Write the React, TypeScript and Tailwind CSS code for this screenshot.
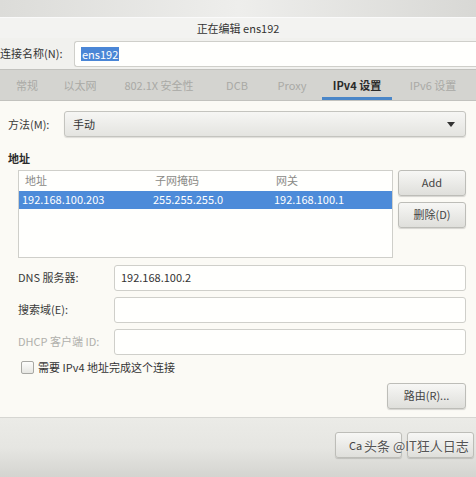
import React from "react";

const font = "font-['Noto_Sans_CJK_SC','Noto_Sans',sans-serif]";

const tabs: { label: string; w: string; active?: boolean }[] = [
  { label: "常规", w: "w-[54px]" },
  { label: "以太网", w: "w-[52px]" },
  { label: "802.1X 安全性", w: "w-[106px]" },
  { label: "DCB", w: "w-[50px]" },
  { label: "Proxy", w: "w-[60px]" },
  { label: "IPv4 设置", w: "w-[70px]", active: true },
  { label: "IPv6 设置", w: "w-[82px]" },
];

function Button({ children, className = "" }: { children: React.ReactNode; className?: string }) {
  return (
    <div
      className={`flex h-[26px] items-center justify-center rounded-[3px] border border-[#bdbdb8] bg-gradient-to-b from-[#f7f7f5] to-[#dfdfdb] text-[11px] text-[#444] shadow-[0_1px_1px_rgba(0,0,0,0.15)] ${className}`}
    >
      {children}
    </div>
  );
}

function Field({ label, value, dim }: { label: string; value?: string; dim?: boolean }) {
  return (
    <div className="flex h-[26px] items-center">
      <span
        className={`w-[114px] shrink-0 whitespace-nowrap pl-[18px] ${dim ? "text-[#b0b0ac]" : "text-[#3a3a3a]"}`}
      >
        {label}
      </span>
      <div className="flex h-full flex-1 items-center rounded-[3px] border border-[#cfcfca] bg-[#fffffd] pl-[6px] text-[#333]">
        {value}
      </div>
    </div>
  );
}

export default function App() {
  return (
    <div className={`flex h-[477px] w-[476px] flex-col overflow-hidden bg-[#fbfaf5] text-[11px] ${font}`}>
      <div className="h-[17px] bg-gradient-to-r from-[#dcdcd9] via-[#eeeeec] to-[#d8d8d5]" />
      <div className="flex h-[21px] items-center justify-center border-t border-[#fafafa] bg-[#f3f3f1] text-[#333]">
        正在编辑 ens192
      </div>

      <div className="flex h-[31px] items-center bg-[#f1f1ee]">
        <span className="w-[74px] text-[#333]">连接名称(N):</span>
        <div className="flex h-[26px] flex-1 items-center rounded-l-[3px] border border-r-0 border-[#cfcfca] bg-[#fffffd] pl-[6px]">
          <span className="bg-[#4a86d6] px-px leading-[14px] text-white">ens192</span>
        </div>
      </div>

      <div className="flex h-[32px] items-stretch border-y border-[#c2c2be] bg-[#d4d4d0]">
        {tabs.map((t) => (
          <div
            key={t.label}
            className={`${t.w} relative flex shrink-0 items-center justify-center ${
              t.active ? "font-bold text-[#2a2a2a]" : "text-[#a9a9a5]"
            }`}
          >
            {t.label}
            {t.active && <div className="absolute bottom-0 left-0 right-0 h-[3px] bg-[#4a86c8]" />}
          </div>
        ))}
      </div>

      <div className="flex flex-1 flex-col pr-[10px]">
        <div className="mt-[10px] flex h-[26px] items-center">
          <span className="w-[64px] pl-[8px] text-[#3a3a3a]">方法(M):</span>
          <div className="flex h-full flex-1 items-center justify-between rounded-[3px] border border-[#c4c4bf] bg-gradient-to-b from-[#f6f6f4] to-[#e4e4e0] pl-[8px] pr-[10px] text-[#333] shadow-[0_1px_1px_rgba(0,0,0,0.12)]">
            <span>手动</span>
            <svg width="8" height="5" viewBox="0 0 8 5">
              <path d="M0 0h8L4 5z" fill="#333" />
            </svg>
          </div>
        </div>

        <div className="mt-[13px] pl-[8px] font-bold text-[#2a2a2a]">地址</div>

        <div className="mt-[3px] flex gap-[5px] pl-[18px]">
          <div className="h-[88px] flex-1 border border-[#cfcfca] bg-[#fffffd]">
            <div className="grid h-[20px] grid-cols-[130px_121px_1fr] items-center pl-[6px] text-[#8a8a86]">
              <span>地址</span>
              <span>子网掩码</span>
              <span>网关</span>
            </div>
            <div className="grid h-[18px] grid-cols-[131px_121px_1fr] items-center bg-[#4d8bd9] pl-[3px] text-white">
              <span>192.168.100.203</span>
              <span>255.255.255.0</span>
              <span>192.168.100.1</span>
            </div>
          </div>
          <div className="flex w-[68px] flex-col gap-[6px]">
            <Button>Add</Button>
            <Button>删除(D)</Button>
          </div>
        </div>

        <div className="mt-[7px] flex flex-col gap-[6px]">
          <Field label="DNS 服务器:" value="192.168.100.2" />
          <Field label="搜索域(E):" />
          <Field label="DHCP 客户端 ID:" dim />
        </div>

        <div className="mt-[6px] flex h-[14px] items-center gap-[4px] pl-[21px] text-[#333]">
          <div className="h-[13px] w-[13px] rounded-[2px] border border-[#a8a8a4] bg-gradient-to-b from-[#fdfdfc] to-[#e6e6e2]" />
          <span>需要 IPv4 地址完成这个连接</span>
        </div>

        <div className="mt-[8px] flex justify-end">
          <Button className="w-[79px]">路由(R)...</Button>
        </div>
      </div>

      <div className="relative h-[60px] border-t border-[#d6d6d2] bg-gradient-to-b from-[#ebebe7] via-[#e6e6e2] to-[#d4d4d0]">
        <div className="absolute right-[2px] top-[14px] flex gap-[5px]">
          <Button className="w-[67px] justify-start overflow-hidden pl-[13px]">Ca</Button>
          <Button className="w-[67px]">{" "}</Button>
        </div>
        <div className="absolute left-[364px] top-[18px] whitespace-nowrap text-[13px] text-[#555] [text-shadow:0_0_2px_#fff]">
          头条 @IT狂人日志
        </div>
      </div>
    </div>
  );
}
